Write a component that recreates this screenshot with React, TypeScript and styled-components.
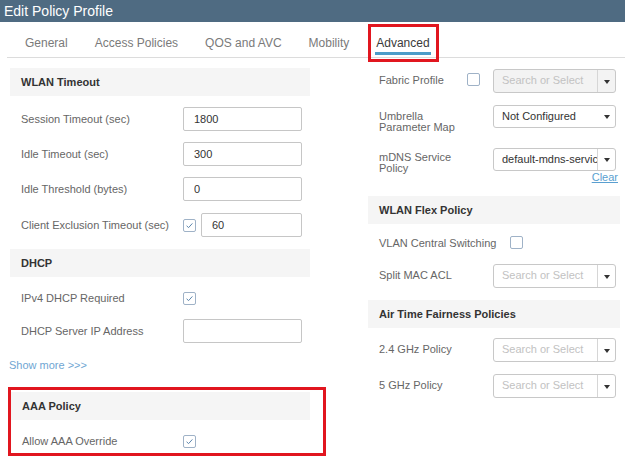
import React from "react";
import styled, { createGlobalStyle } from "styled-components";

const GlobalStyle = createGlobalStyle`
  html, body { margin: 0; padding: 0; background: #fff; }
  body {
    width: 625px;
    height: 462px;
    overflow: hidden;
    font-family: "Liberation Sans", Arial, Helvetica, sans-serif;
  }
`;

const Page = styled.div`
  width: 625px;
  height: 462px;
  overflow: hidden;
  background: #fff;
`;

const TitleBar = styled.div`
  height: 22px;
  background: #4f6b82;
  color: #fff;
  font-size: 14px;
  display: flex;
  align-items: center;
  padding-left: 4px;
`;

const TabBar = styled.div`
  margin-left: 7px;
  height: 36px;
  box-sizing: border-box;
  border-bottom: 1px solid #dcdcdc;
  padding-left: 4.5px;
  display: flex;
`;

const Tab = styled.div<{ $active?: boolean; $highlight?: boolean }>`
  position: relative;
  height: 35px;
  box-sizing: border-box;
  padding: 7px 13.5px 0;
  display: flex;
  align-items: center;
  font-size: 12px;
  color: ${(p) => (p.$active ? "#3a3a3a" : "#7a7a7a")};
  white-space: nowrap;

  &::after {
    content: "";
    display: ${(p) => (p.$active ? "block" : "none")};
    position: absolute;
    left: 12.5px;
    right: 12.5px;
    bottom: 2px;
    height: 3px;
    background: #4b9cc8;
  }

  &::before {
    content: "";
    display: ${(p) => (p.$highlight ? "block" : "none")};
    position: absolute;
    left: 5.5px;
    right: 4px;
    top: 2px;
    bottom: -5px;
    border: 3px solid #e1161f;
  }
`;

const Content = styled.div`
  display: flex;
  gap: 58px;
  padding-left: 10px;
`;

const Column = styled.div<{ $w: number }>`
  width: ${(p) => p.$w}px;
  display: flex;
  flex-direction: column;
`;

const SectionHeader = styled.div<{ $mt?: number }>`
  height: 28px;
  margin-top: ${(p) => p.$mt ?? 0}px;
  background: #f5f5f5;
  padding-left: 11px;
  display: flex;
  align-items: center;
  font-size: 11px;
  font-weight: bold;
  color: #333;
  flex: none;
`;

const FieldRow = styled.div<{ $mt?: number }>`
  height: 24px;
  margin-top: ${(p) => p.$mt ?? 0}px;
  padding-left: 11px;
  display: flex;
  align-items: center;
  flex: none;
`;

const FieldLabel = styled.div<{ $w?: number }>`
  width: ${(p) => p.$w ?? 162}px;
  flex: none;
  font-size: 11px;
  color: #666;
  white-space: nowrap;
`;

const TextInput = styled.input<{ $w?: number }>`
  width: ${(p) => p.$w ?? 119}px;
  height: 24px;
  box-sizing: border-box;
  border: 1px solid #c6c6c6;
  border-radius: 2px;
  padding: 0 10px;
  font-family: "Liberation Sans", Arial, sans-serif;
  font-size: 11px;
  color: #333;
  background: #fff;
  outline: none;
`;

const Box = styled.div<{ $ml?: number; $mr?: number; $mt?: number }>`
  width: 13px;
  height: 13px;
  box-sizing: border-box;
  border: 1px solid #9fb2c7;
  border-radius: 2px;
  background: #fff;
  margin-left: ${(p) => p.$ml ?? 0}px;
  margin-right: ${(p) => p.$mr ?? 0}px;
  margin-top: ${(p) => p.$mt ?? 0}px;
  display: flex;
  align-items: center;
  justify-content: center;
  flex: none;
`;

const ShowMore = styled.div`
  margin-top: 15px;
  margin-left: -1px;
  line-height: 14px;
  font-size: 11px;
  color: #6fa6d3;
`;

const Highlight = styled.div`
  margin-top: 15px;
  margin-left: -2px;
  width: 318px;
  box-sizing: border-box;
  border: 3px solid #e1161f;
  padding-top: 2px;

  & > ${SectionHeader} {
    width: 299px;
    box-sizing: border-box;
  }
`;

const RightRow = styled.div<{ $mt?: number; $h?: number }>`
  height: ${(p) => p.$h ?? 24}px;
  margin-top: ${(p) => p.$mt ?? 0}px;
  padding-left: 11px;
  display: flex;
  align-items: flex-start;
  flex: none;
`;

const RightLabel = styled.div<{ $w?: number; $pt?: number }>`
  width: ${(p) => (p.$w ? `${p.$w}px` : "auto")};
  flex: none;
  padding-top: ${(p) => p.$pt ?? 6}px;
  font-size: 11px;
  line-height: 11px;
  color: #666;
`;

const SelectBox = styled.div<{ $disabled?: boolean; $h?: number }>`
  width: 123px;
  height: ${(p) => p.$h ?? 24}px;
  box-sizing: border-box;
  border: 1px solid #c8c8c8;
  border-radius: 3px;
  background: ${(p) => (p.$disabled ? "#f3f3f3" : "#fff")};
  display: flex;
  align-items: stretch;
  flex: none;
  overflow: hidden;
`;

const SelectValue = styled.div<{ $placeholder?: boolean }>`
  flex: 1;
  min-width: 0;
  padding: 4px 0 0 8px;
  font-size: 11px;
  line-height: 12px;
  color: ${(p) => (p.$placeholder ? "#c2c2c2" : "#333")};
  white-space: nowrap;
  overflow: hidden;
`;

const ArrowCell = styled.div<{ $sep?: boolean }>`
  width: 18px;
  flex: none;
  border-left: 1px solid ${(p) => (p.$sep ? "#d6d6d6" : "transparent")};
  display: flex;
  align-items: center;
  justify-content: center;
  padding-top: 1px;
  box-sizing: border-box;
`;

const Caret = styled.span`
  width: 0;
  height: 0;
  border-left: 3px solid transparent;
  border-right: 3px solid transparent;
  border-top: 4px solid #333;
`;

const ClearRow = styled.div`
  display: flex;
  justify-content: flex-end;
  padding-right: 2px;
  line-height: 12px;
  font-size: 11px;
`;

const ClearLink = styled.span`
  color: #5a9fd0;
  text-decoration: underline;
`;

const Check: React.FC<{ checked?: boolean; ml?: number; mr?: number; mt?: number }> = ({
  checked,
  ml,
  mr,
  mt,
}) => (
  <Box $ml={ml} $mr={mr} $mt={mt}>
    {checked && (
      <svg width="9" height="9" viewBox="0 0 9 9">
        <polyline
          points="1.6,4.8 3.6,6.6 7.4,2.4"
          fill="none"
          stroke="#5d86ad"
          strokeWidth="1"
        />
      </svg>
    )}
  </Box>
);

const Select: React.FC<{
  value: string;
  placeholder?: boolean;
  sep?: boolean;
  disabled?: boolean;
  h?: number;
}> = ({ value, placeholder, sep, disabled, h }) => (
  <SelectBox $disabled={disabled} $h={h}>
    <SelectValue $placeholder={placeholder}>{value}</SelectValue>
    <ArrowCell $sep={sep}>
      <Caret />
    </ArrowCell>
  </SelectBox>
);

const tabs = ["General", "Access Policies", "QOS and AVC", "Mobility", "Advanced"];

export default function App() {
  return (
    <Page>
      <GlobalStyle />
      <TitleBar>Edit Policy Profile</TitleBar>
      <TabBar>
        {tabs.map((t) => (
          <Tab key={t} $active={t === "Advanced"} $highlight={t === "Advanced"}>
            {t}
          </Tab>
        ))}
      </TabBar>
      <Content>
        <Column $w={300}>
          <SectionHeader $mt={10}>WLAN Timeout</SectionHeader>
          <FieldRow $mt={11}>
            <FieldLabel>Session Timeout (sec)</FieldLabel>
            <TextInput readOnly value="1800" />
          </FieldRow>
          <FieldRow $mt={11}>
            <FieldLabel>Idle Timeout (sec)</FieldLabel>
            <TextInput readOnly value="300" />
          </FieldRow>
          <FieldRow $mt={11}>
            <FieldLabel>Idle Threshold (bytes)</FieldLabel>
            <TextInput readOnly value="0" />
          </FieldRow>
          <FieldRow $mt={12}>
            <FieldLabel>Client Exclusion Timeout (sec)</FieldLabel>
            <Check checked mr={5} />
            <TextInput readOnly value="60" $w={101} />
          </FieldRow>
          <SectionHeader $mt={12}>DHCP</SectionHeader>
          <FieldRow $mt={9}>
            <FieldLabel>IPv4 DHCP Required</FieldLabel>
            <Check checked />
          </FieldRow>
          <FieldRow $mt={9}>
            <FieldLabel>DHCP Server IP Address</FieldLabel>
            <TextInput readOnly value="" />
          </FieldRow>
          <ShowMore>Show more &gt;&gt;&gt;</ShowMore>
          <Highlight>
            <SectionHeader>AAA Policy</SectionHeader>
            <FieldRow $mt={9}>
              <FieldLabel $w={161}>Allow AAA Override</FieldLabel>
              <Check checked />
            </FieldRow>
          </Highlight>
        </Column>

        <Column $w={252}>
          <RightRow $mt={11}>
            <RightLabel $w={88}>Fabric Profile</RightLabel>
            <Check mt={4} mr={13} />
            <Select value="Search or Select" placeholder sep disabled />
          </RightRow>
          <RightRow $mt={12} $h={23}>
            <RightLabel $w={114} $pt={6}>
              Umbrella
              <br />
              Parameter Map
            </RightLabel>
            <Select value="Not Configured" h={23} />
          </RightRow>
          <RightRow $mt={20} $h={23}>
            <RightLabel $w={114} $pt={4}>
              mDNS Service
              <br />
              Policy
            </RightLabel>
            <Select value="default-mdns-service-policy" sep h={23} />
          </RightRow>
          <ClearRow>
            <ClearLink>Clear</ClearLink>
          </ClearRow>
          <SectionHeader $mt={13}>WLAN Flex Policy</SectionHeader>
          <RightRow $mt={6}>
            <RightLabel $pt={8}>VLAN Central Switching</RightLabel>
            <Check ml={14} mt={6} />
          </RightRow>
          <RightRow $mt={10}>
            <RightLabel $w={114}>Split MAC ACL</RightLabel>
            <Select value="Search or Select" placeholder sep />
          </RightRow>
          <SectionHeader $mt={12}>Air Time Fairness Policies</SectionHeader>
          <RightRow $mt={10}>
            <RightLabel $w={114}>2.4 GHz Policy</RightLabel>
            <Select value="Search or Select" placeholder sep />
          </RightRow>
          <RightRow $mt={12}>
            <RightLabel $w={114}>5 GHz Policy</RightLabel>
            <Select value="Search or Select" placeholder sep />
          </RightRow>
        </Column>
      </Content>
    </Page>
  );
}
